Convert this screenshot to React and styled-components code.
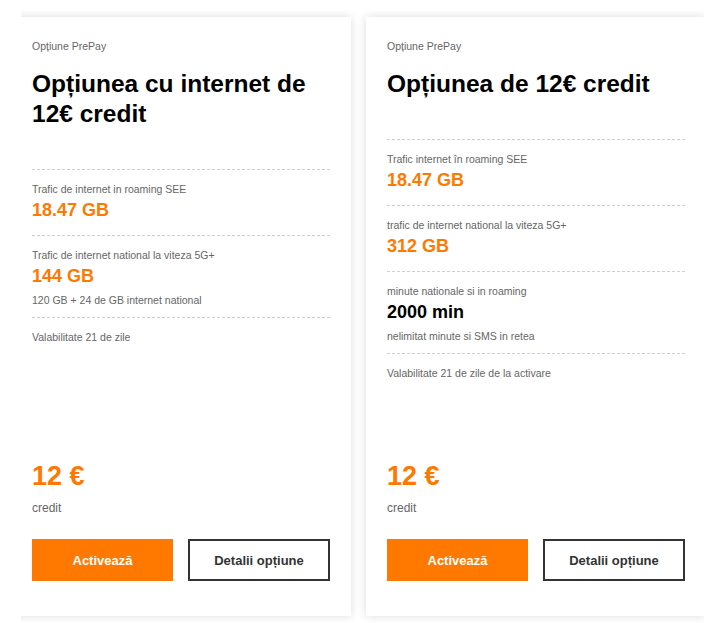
import React from "react";
import styled, { createGlobalStyle } from "styled-components";

const Global = createGlobalStyle`
  html, body { margin: 0; padding: 0; background: #fff; }
  body { font-family: "Liberation Sans", Arial, Helvetica, sans-serif; }
  * { box-sizing: border-box; }
`;

const Viewport = styled.div`
  margin-left: 21px;
  width: 683px;
  height: 623px;
  overflow: hidden;
  padding-top: 17px;
`;

const Track = styled.div`
  display: flex;
  gap: 15px;
  margin-left: -10px;
`;

const Card = styled.div`
  flex: 0 0 340px;
  height: 599px;
  background: #fff;
  box-shadow: 0 0 9px rgba(0, 0, 0, 0.14);
  padding: 22px 21px 35px;
  display: flex;
  flex-direction: column;
`;

const Eyebrow = styled.div`
  font-size: 10.5px;
  line-height: 14px;
  color: #666;
`;

const Title = styled.h2`
  margin: 16px 0 40px;
  font-size: 24.5px;
  line-height: 30px;
  font-weight: 700;
  color: #000;
`;

const Row = styled.div`
  border-top: 1px dashed #cfcfcf;
  padding: 12px 0 ${(p) => (p.$last ? "0" : "14px")};
`;

const Label = styled.div`
  font-size: 10.5px;
  line-height: 14px;
  color: #666;
`;

const Value = styled.div`
  margin-top: 3px;
  font-size: 18px;
  line-height: 22px;
  font-weight: 700;
  color: ${(p) => (p.$dark ? "#000" : "#ff7900")};
`;

const Note = styled.div`
  margin: 6px 0 -4px;
  font-size: 10.5px;
  line-height: 14px;
  color: #666;
`;

const Footer = styled.div`
  margin-top: auto;
`;

const Price = styled.div`
  font-size: 27px;
  line-height: 32px;
  font-weight: 700;
  color: #ff7900;
`;

const PriceUnit = styled.div`
  margin-top: 8px;
  font-size: 12px;
  line-height: 16px;
  color: #666;
`;

const Actions = styled.div`
  margin-top: 23px;
  display: grid;
  grid-template-columns: 141px 142px;
  gap: 15px;
`;

const Button = styled.button`
  height: 42px;
  font-family: inherit;
  font-size: 13px;
  font-weight: 700;
  cursor: pointer;
  background: ${(p) => (p.$primary ? "#ff7900" : "#fff")};
  color: ${(p) => (p.$primary ? "#fff" : "#333")};
  border: ${(p) => (p.$primary ? "none" : "2px solid #333")};
  padding: 0;
`;

const cards = [
  {
    title: "Opțiunea cu internet de 12€ credit",
    rows: [
      { label: "Trafic de internet in roaming SEE", value: "18.47 GB" },
      {
        label: "Trafic de internet national la viteza 5G+",
        value: "144 GB",
        note: "120 GB + 24 de GB internet national",
      },
    ],
    validity: "Valabilitate 21 de zile",
  },
  {
    title: "Opțiunea de 12€ credit",
    rows: [
      { label: "Trafic internet în roaming SEE", value: "18.47 GB" },
      { label: "trafic de internet national la viteza 5G+", value: "312 GB" },
      {
        label: "minute nationale si in roaming",
        value: "2000 min",
        dark: true,
        note: "nelimitat minute si SMS in retea",
      },
    ],
    validity: "Valabilitate 21 de zile de la activare",
  },
];

export default function App() {
  return (
    <>
      <Global />
      <Viewport>
        <Track>
          {cards.map((c, i) => (
            <Card key={i}>
              <Eyebrow>Opțiune PrePay</Eyebrow>
              <Title>{c.title}</Title>
              {c.rows.map((r, j) => (
                <Row key={j}>
                  <Label>{r.label}</Label>
                  <Value $dark={r.dark}>{r.value}</Value>
                  {r.note && <Note>{r.note}</Note>}
                </Row>
              ))}
              <Row $last>
                <Label>{c.validity}</Label>
              </Row>
              <Footer>
                <Price>12 €</Price>
                <PriceUnit>credit</PriceUnit>
                <Actions>
                  <Button $primary>Activează</Button>
                  <Button>Detalii opțiune</Button>
                </Actions>
              </Footer>
            </Card>
          ))}
        </Track>
      </Viewport>
    </>
  );
}
